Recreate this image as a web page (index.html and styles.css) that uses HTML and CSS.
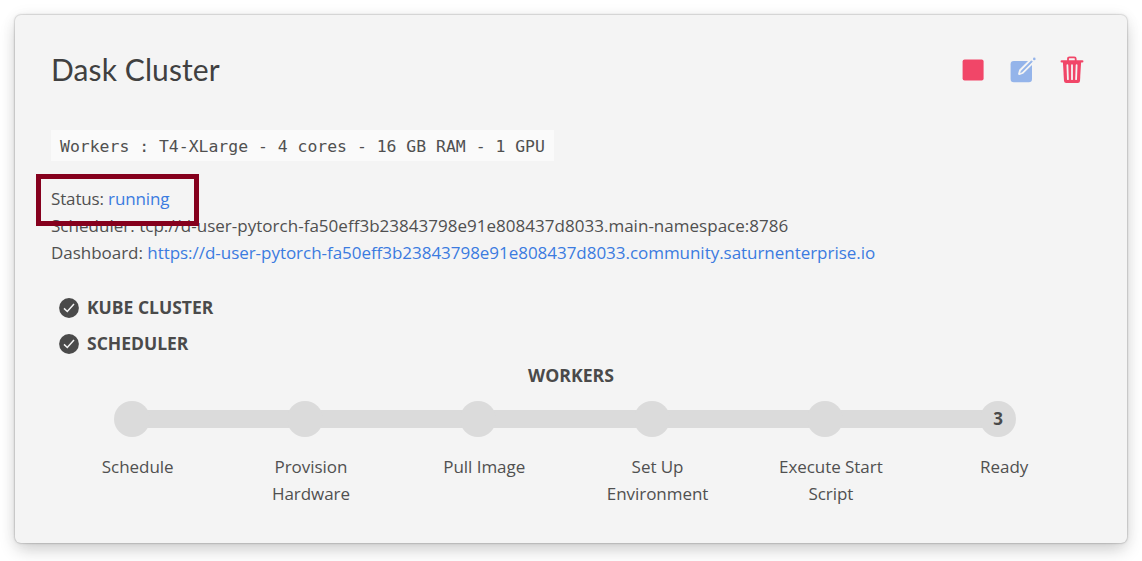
FILE: index.html
```html
<!DOCTYPE html>
<html lang="en">
<head>
<meta charset="utf-8">
<title>Dask Cluster</title>
<link rel="stylesheet" href="styles.css">
</head>
<body>
<main class="card">
  <header class="card-header">
    <h1 class="title">Dask Cluster</h1>
    <div class="actions">
      <svg class="icon-stop" width="22" height="22" viewBox="0 0 22 22"><rect x="0.6" y="0.5" width="21" height="21" rx="2" fill="#f14668"/></svg>
      <svg class="icon-edit" width="26" height="26" viewBox="0 0 26 26"><rect x="0.6" y="4" width="21.4" height="21.2" rx="3.2" fill="#94b4ea"/><path d="M9.2 16.9 L10.2 13.4 L20.6 3 L23 5.4 L12.6 15.8 Z" fill="#f4f4f4" stroke="#f4f4f4" stroke-width="2.2" stroke-linejoin="round"/><path d="M10.6 15.6 L11.4 13.8 L21.4 3.7 L22.4 4.7 L12.3 14.8 Z" fill="#94b4ea" stroke="#94b4ea" stroke-width="0.7" stroke-linejoin="round"/><circle cx="24.3" cy="1.9" r="1.3" fill="#94b4ea"/></svg>
      <svg class="icon-trash" width="24" height="28" viewBox="0 0 24 28"><g fill="none" stroke="#f14668"><path d="M8 5 V2.7 Q8 1.3 9.4 1.3 H14.3 Q15.7 1.3 15.7 2.7 V5" stroke-width="1.8"/><path d="M1.7 5.4 H22.3" stroke-width="2.3" stroke-linecap="round"/></g><path d="M2.9 6 H21.1 L20 25 Q19.8 27 17.8 27 H6.2 Q4.2 27 4 25 Z" fill="#f14668"/><path d="M7.4 9.2 L7.9 23.2 M12 9.2 V23.2 M16.6 9.2 L16.1 23.2" fill="none" stroke="#f4f4f4" stroke-width="1.8" stroke-linecap="round"/></svg>
    </div>
  </header>
  <code class="spec">Workers : T4-XLarge - 4 cores - 16 GB RAM - 1 GPU</code>
  <section class="details">
    <div class="status">Status: <a class="link">running</a><span class="highlight"></span></div>
    <div class="scheduler">Scheduler: tcp://d-user-pytorch-fa50eff3b23843798e91e808437d8033.main-namespace:8786</div>
    <div class="dashboard">Dashboard: <a class="link">https://d-user-pytorch-fa50eff3b23843798e91e808437d8033.community.saturnenterprise.io</a></div>
  </section>
  <section class="checks">
    <div class="check"><svg width="20" height="20" viewBox="0 0 20 20"><circle cx="10" cy="10" r="9.9" fill="#4a4a4a"/><path d="M5 10.4 L8.3 13.5 L15 5.9" fill="none" stroke="#f4f4f4" stroke-width="1.5"/></svg><strong class="check-name">KUBE CLUSTER</strong></div>
    <div class="check"><svg width="20" height="20" viewBox="0 0 20 20"><circle cx="10" cy="10" r="9.9" fill="#4a4a4a"/><path d="M5 10.4 L8.3 13.5 L15 5.9" fill="none" stroke="#f4f4f4" stroke-width="1.5"/></svg><strong class="check-name">SCHEDULER</strong></div>
  </section>
  <h2 class="workers">WORKERS</h2>
  <div class="steps">
    <div class="step"><span class="dot"></span><p class="label">Schedule</p></div>
    <div class="step"><span class="dot"></span><p class="label">Provision<br>Hardware</p></div>
    <div class="step"><span class="dot"></span><p class="label">Pull Image</p></div>
    <div class="step"><span class="dot"></span><p class="label">Set Up<br>Environment</p></div>
    <div class="step"><span class="dot"></span><p class="label">Execute Start<br>Script</p></div>
    <div class="step"><span class="dot">3</span><p class="label">Ready</p></div>
  </div>
</main>
</body>
</html>
```
FILE: styles.css
```css
* { box-sizing: border-box; }
body { margin: 0; padding: 15px; background: #fff; height: 561px; overflow: hidden; color: #505050; font: 17px/27px "Open Sans", "Noto Sans", sans-serif; }
.card { width: 1112px; height: 528px; padding: 36px; background: #f4f4f4; border-radius: 6px; box-shadow: 0 8px 18px -2px rgba(10,10,10,.2), 0 0 0 1px rgba(10,10,10,.06), 0 0 16px rgba(10,10,10,.05), 0 0 3px rgba(10,10,10,.2); }
.card-header { display: flex; justify-content: space-between; height: 79px; }
.title { margin: 0; font: 400 30px/36px Lato, sans-serif; letter-spacing: .1px; color: #404040; }
.actions { display: flex; align-items: flex-start; padding-right: 7px; }
.icon-stop { margin-top: 8px; }
.icon-edit { margin: 6px 0 0 26px; }
.icon-trash { margin: 5px 0 0 24px; }
.spec { display: block; width: 503px; height: 31px; padding: 0 9px; background: #fafafa; font: 16.45px/33px "DejaVu Sans Mono", monospace; white-space: pre; }
.details { margin-top: 24px; white-space: nowrap; }
.link { color: #3b7be0; }
.status { position: relative; letter-spacing: -.15px; }
.scheduler { letter-spacing: .02px; }
.dashboard { letter-spacing: -.035px; }
.highlight { position: absolute; left: -15px; top: -11px; width: 163px; height: 52px; border: 5px solid #85001d; }
.checks { padding: 24px 0 0 8px; }
.check { display: flex; align-items: center; gap: 8px; height: 36px; }
.check-name { font-size: 17.5px; line-height: 25px; padding-bottom: 2px; }
.workers { margin: 0; font-size: 17.7px; line-height: 27px; font-weight: 700; text-align: center; }
.steps { display: flex; margin: 12px 0 0 -6px; }
.step { width: 173.3px; position: relative; display: flex; flex-direction: column; align-items: center; flex: none; }
.step:not(:last-child)::after { content: ""; position: absolute; top: 9px; left: 50%; width: 100%; height: 18px; background: #dbdbdb; }
.dot { position: relative; z-index: 1; width: 36px; height: 36px; border-radius: 50%; background: #dbdbdb; color: #4a4a4a; text-align: center; line-height: 36px; font-weight: 700; font-size: 17px; }
.workers, .check-name { color: #4a4a4a; }
.label { margin: 16px -12px 0 0; text-align: center; letter-spacing: -.05px; }
```
